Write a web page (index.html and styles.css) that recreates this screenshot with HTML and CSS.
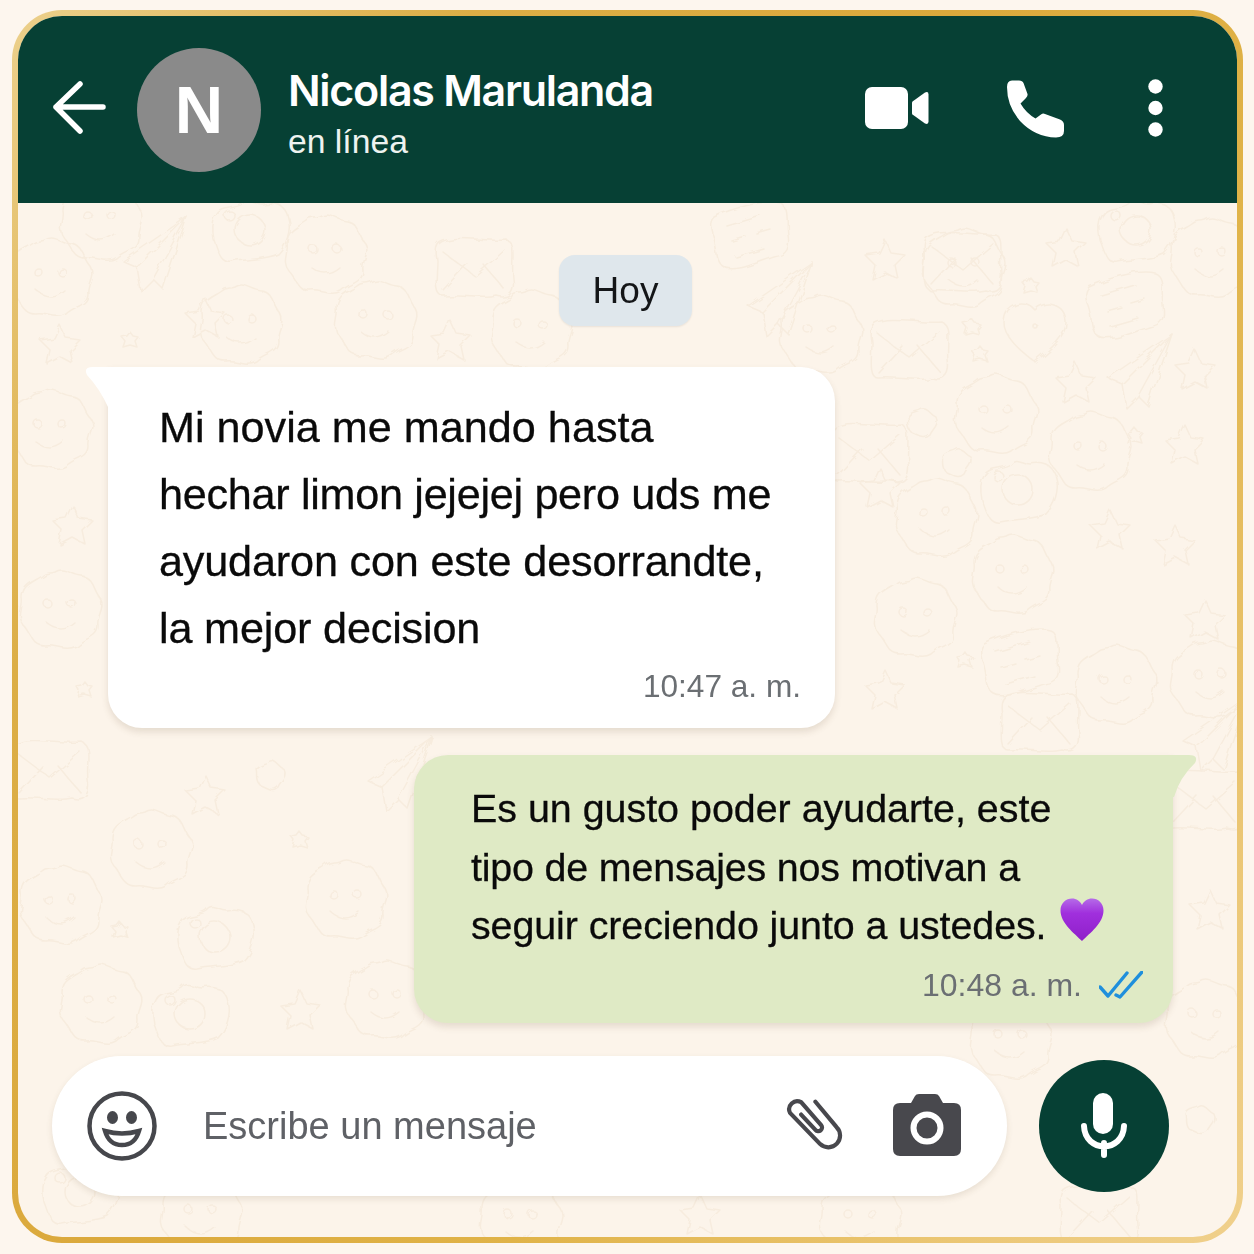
FILE: index.html
```html
<!DOCTYPE html>
<html lang="es">
<head>
<meta charset="utf-8">
<title>Chat</title>
<link rel="stylesheet" href="styles.css">
</head>
<body>
<main class="frame">
  <div class="phone">
    <header class="topbar">
      <svg class="ic-back" viewBox="0 0 54 54"><path d="M3 26H50M27 3 3 26 27 50"/></svg>
      <div class="avatar">N</div>
      <div class="who">
        <div class="name">Nicolas Marulanda</div>
        <div class="status">en línea</div>
      </div>
      <svg class="ic-video" viewBox="0 0 64 44"><rect x="0" y="1" width="43" height="42" rx="7"/><path d="M47.500 15.500 60 6.500Q63.500 5 63.500 8.500V35.500Q63.500 39 60 37.500L47.500 28.500Q47 28 47 27V17Q47 16 47.500 15.500Z"/></svg>
      <svg class="ic-phone" viewBox="0 0 58 58"><path d="M5 .5H12Q15.500 .5 16.500 3L20.500 14Q21 16 19 18L13.500 23.500Q19 33 28.500 38.500L34 34.500Q36 33 38 34L53 39.500Q57 41 57 45V51Q57 57.500 49 57.500 28 57 13 41 0 26 0 7 0 .5 5 .5Z"/></svg>
      <svg class="ic-dots" viewBox="0 0 15 58"><circle cx="7.500" cy="7.500" r="7.200"/><circle cx="7.500" cy="29" r="7.200"/><circle cx="7.500" cy="50.500" r="7.200"/></svg>
    </header>

    <section class="chat">
      <svg class="doodles" viewBox="18 203 1219 1034" aria-hidden="true">
        <defs>
          <filter id="wobble" x="0" y="0" width="100%" height="100%"><feTurbulence type="fractalNoise" baseFrequency=".07" numOctaves="2" seed="4"/><feDisplacementMap in="SourceGraphic" scale="7"/></filter>
          <g id="star"><path d="M0-20 6-7 20-5 10 5 13 19 0 12-13 19-10 5-20-5-6-7Z"/></g>
          <g id="mini"><path d="M-8-3-3-4 0-8 3-4 8-3 5 1 7 7 0 5-7 7-5 1Z"/></g>
          <g id="heart"><path d="M0-20C8-30 30-28 31-8 32 6 12 22 0 32-10 24-32 8-31-8-30-27-9-31 0-20Z"/><circle cx="0" cy="-4" r="2"/></g>
          <g id="face"><path d="M-5-38C5-44 12-34 22-34 34-32 32-20 40-12 46-2 36 6 38 16 38 28 24 28 16 36 6 42-4 34-14 36-28 36-28 24-36 16-44 6-36-2-38-12-38-26-26-28-18-34-14-38-10-36-5-38Z"/><circle cx="-12" cy="-6" r="4"/><circle cx="12" cy="-6" r="4"/><path d="M-14 12Q0 24 14 12"/></g>
          <g id="mail"><path d="M-34-26C-20-34 10-26 32-28 42-24 36-6 38 10 40 22 36 32 22 28 6 32-14 26-32 28-42 28-38 6-38-8-40-18-38-24-34-26Z"/><path d="M-32-16 0 8 30-18M-32 22-8-4M30 22 8-4"/></g>
          <g id="card"><path d="M-36-18C-20-26 14-36 30-32 40-28 36-14 38 0 40 12 38 20 24 22 6 28-16 38-26 32-36 26-32 10-38-2-40-10-40-14-36-18Z"/><path d="M-24-10 10-20M-18 6-4 2M6-2 20-6M-14 22 14 14"/></g>
          <g id="plane"><path d="M32-38 8 34-2 24-14 36-18 12-32 6Z"/><path d="M32-38-18 12M32-38-2 24"/></g>
          <g id="cam"><path d="M-34-12C-30-22-16-18-8-24-2-32 4-24 12-24 24-26 36-24 38-10 42 2 36 18 28 26 16 32 0 30-18 34-30 36-32 22-36 12-38 2-38-6-34-12Z"/><circle cx="0" cy="2" r="15"/><circle cx="-20" cy="-12" r="5"/></g>
          <g id="blob"><path d="M0-14C6-16 8-8 14-6 18 2 10 6 8 12 2 18-4 12-10 10-16 4-12-2-14-6-12-12-6-10 0-14Z"/></g>
        </defs>
        <g filter="url(#wobble)">
        <use href="#star" x="885" y="260"/><use href="#face" x="963" y="268"/><use href="#mail" x="963" y="262"/>
        <use href="#star" x="1066" y="248"/><use href="#cam" x="1136" y="228"/><use href="#face" x="1210" y="258"/>
        <use href="#card" x="1125" y="305"/><use href="#heart" x="1035" y="330"/><use href="#mail" x="910" y="350"/>
        <use href="#plane" x="1140" y="372"/><use href="#star" x="1195" y="370"/><use href="#mini" x="1030" y="285"/>
        <use href="#mini" x="972" y="327"/><use href="#mini" x="980" y="354"/><use href="#star" x="1076" y="383"/>
        <use href="#face" x="995" y="415"/><use href="#blob" x="922" y="423"/><use href="#mail" x="870" y="453"/>
        <use href="#blob" x="957" y="463"/><use href="#cam" x="1018" y="488"/><use href="#face" x="1090" y="452"/>
        <use href="#star" x="1185" y="445"/><use href="#mini" x="1135" y="436"/><use href="#face" x="935" y="518"/>
        <use href="#star" x="880" y="488"/><use href="#face" x="1012" y="575"/><use href="#star" x="1110" y="530"/>
        <use href="#card" x="1020" y="662"/><use href="#star" x="1205" y="620"/>
        <use href="#face" x="915" y="618"/><use href="#face" x="1115" y="685"/><use href="#mini" x="965" y="660"/>
        <use href="#star" x="1175" y="545"/><use href="#face" x="1210" y="680"/><use href="#star" x="885" y="690"/>
        <use href="#mail" x="1040" y="722"/><use href="#plane" x="1215" y="735"/>
        <use href="#plane" x="155" y="255"/><use href="#face" x="100" y="222"/><use href="#face" x="50" y="278"/>
        <use href="#face" x="375" y="320"/><use href="#face" x="325" y="255"/><use href="#cam" x="250" y="228"/>
        <use href="#star" x="205" y="318"/><use href="#mail" x="475" y="268"/><use href="#face" x="240" y="325"/>
        <use href="#star" x="450" y="340"/><use href="#face" x="530" y="330"/><use href="#mini" x="130" y="340"/>
        <use href="#card" x="750" y="235"/><use href="#face" x="820" y="335"/><use href="#plane" x="780" y="300"/>
        <use href="#star" x="60" y="345"/><use href="#face" x="50" y="430"/><use href="#star" x="72" y="525"/>
        <use href="#face" x="60" y="610"/><use href="#mini" x="85" y="690"/><use href="#mail" x="50" y="770"/>
        <use href="#star" x="205" y="795"/><use href="#plane" x="400" y="775"/><use href="#face" x="150" y="850"/>
        <use href="#cam" x="215" y="935"/><use href="#face" x="345" y="900"/><use href="#face" x="60" y="905"/>
        <use href="#blob" x="270" y="775"/><use href="#mini" x="300" y="840"/><use href="#mini" x="120" y="930"/>
        <use href="#face" x="100" y="1005"/><use href="#cam" x="190" y="1012"/><use href="#star" x="300" y="1010"/>
        <use href="#face" x="385" y="1000"/><use href="#mail" x="1205" y="800"/><use href="#star" x="1210" y="910"/>
        <use href="#face" x="1205" y="1020"/><use href="#cam" x="80" y="1190"/><use href="#face" x="200" y="1215"/>
        <use href="#face" x="520" y="1220"/><use href="#star" x="700" y="1215"/><use href="#face" x="860" y="1220"/>
        <use href="#mail" x="1100" y="1215"/><use href="#face" x="1010" y="1040"/><use href="#blob" x="1200" y="1120"/>
        </g>
      </svg>

      <div class="day">Hoy</div>

      <article class="bubble in">
        <p class="text">Mi novia me mando hasta<br><span class="tight">hechar limon jejejej pero uds me</span><br><span class="snug">ayudaron con este desorrandte,</span><br><span class="snug">la mejor decision</span></p>
        <div class="meta">10:47 a. m.</div>
      </article>

      <article class="bubble out">
        <p class="text">Es un gusto poder ayudarte, este<br><span class="snug">tipo de mensajes nos motivan a</span><br><span class="snug2">seguir creciendo junto a ustedes.</span><svg class="emoji" viewBox="0 0 44 44"><defs><linearGradient id="hg" x1="0" y1="0" x2="0" y2="1"><stop offset="0" stop-color="#b56be8"/><stop offset=".35" stop-color="#a02fdd"/><stop offset="1" stop-color="#8f1fc9"/></linearGradient></defs><path fill="url(#hg)" d="M22 43C14 35 .5 25 .5 12.500.5 5 6 .5 12 .5 16.500.5 20 3 22 7 24 3 27.500.5 32 .5 38 .5 43.500 5 43.500 12.500 43.500 25 30 35 22 43Z"/></svg></p>
        <div class="meta">10:48 a. m.<svg class="ticks" viewBox="0 0 44 28"><path d="M1 16 9 25 28 2M17 24 21 26 43 1"/></svg></div>
      </article>

      <footer class="composer">
        <div class="field">
          <svg class="ic-smile" viewBox="0 0 70 72"><circle cx="35" cy="36" r="32.500"/><ellipse class="solid" cx="25.500" cy="27.500" rx="5.500" ry="6.500"/><ellipse class="solid" cx="44.500" cy="27.500" rx="5.500" ry="6.500"/><path d="M18 41Q35 46 52 41 48 55 35 55 22 55 18 41Z"/></svg>
          <span class="placeholder">Escribe un mensaje</span>
          <svg class="ic-clip" viewBox="0 0 63 60"><path d="M33 4.500 55 31A11.500 11.500 0 0 1 38 49L6.300 16.200A8.500 8.500 0 0 1 18 5L39 29A3.800 3.800 0 0 1 33 34L18 18"/></svg>
          <svg class="ic-cam" viewBox="0 0 68 62"><path d="M7 9H18L22 2Q23 0 26 0H42Q45 0 46 2L50 9H61Q68 9 68 16V55Q68 62 61 62H7Q0 62 0 55V16Q0 9 7 9Z"/><circle class="ring" cx="34" cy="34" r="13.500"/></svg>
        </div>
        <button class="mic" type="button" aria-label="Micrófono">
          <svg viewBox="0 0 46 66"><rect class="cap" x="12" y="0" width="20" height="41" rx="10"/><path d="M3 33C4 60 42 60 43 33M23 50V62"/></svg>
        </button>
      </footer>
    </section>
  </div>
</main>
</body>
</html>
```

FILE: styles.css
```css
* { box-sizing: border-box; }
html, body { margin: 0; padding: 0; }
body {
  width: 1254px;
  height: 1254px;
  overflow: hidden;
  background: #fdf6ee;
  font-family: "Liberation Sans", Arial, sans-serif;
}
.frame {
  width: 1231px;
  height: 1233px;
  margin: 10px 0 0 12px;
  padding: 6px;
  border-radius: 50px;
  background: linear-gradient(125deg, #ecd08c 0%, #dcae46 22%, #dba93c 45%, #e0b348 65%, #ecc878 88%, #f0d08c 100%);
}
.phone {
  height: 100%;
  border-radius: 44px;
  overflow: hidden;
  display: flex;
  flex-direction: column;
  background: #fcf4ea;
}
.topbar {
  flex: 0 0 187px;
  background: #064034;
  display: flex;
  align-items: center;
  color: #fff;
  position: relative;
}
.ic-back { width: 54px; height: 54px; margin: 0 0 3px 35px; fill: none; stroke: #fff; stroke-width: 5.500; stroke-linecap: round; stroke-linejoin: round; }
.avatar {
  width: 124px; height: 124px; margin-left: 30px;
  border-radius: 50%;
  background: #8a8a8a;
  display: flex; align-items: center; justify-content: center;
  font-size: 67px; font-weight: 700;
}
.who { margin-left: 27px; flex: 1; margin-top: 9px; }
.name { font-family: Inter, "Liberation Sans", sans-serif; font-size: 43px; font-weight: 600; line-height: 52px; letter-spacing: -1.300px; }
.status { font-size: 33.700px; line-height: 46px; color: #eef3f0; margin-top: 2px; }
.ic-video { width: 64px; height: 44px; fill: #fff; margin: 0 78px 4px 0; }
.ic-phone { width: 58px; height: 58px; fill: #fff; margin: 0 83px 2px 0; }
.ic-dots { width: 15px; height: 58px; fill: #fff; margin: 0 74px 4px 0; }

.chat {
  flex: 1;
  position: relative;
  display: flex;
  flex-direction: column;
  align-items: flex-start;
}
.doodles {
  position: absolute; left: 0; top: 0;
  width: 1219px; height: 1034px;
  fill: none; stroke: #f7ecde; stroke-width: 1.500; stroke-linejoin: round; stroke-linecap: round;
}
.day {
  position: relative;
  align-self: center;
  margin-top: 52px;
  margin-right: 4px;
  width: 133px; height: 71px;
  border-radius: 16px;
  background: #dfe7ec;
  display: flex; align-items: center; justify-content: center;
  font-size: 37px; color: #141618;
  box-shadow: 0 1px 2px rgba(0,0,0,.08);
}
.bubble {
  position: relative;
  color: #0a0a0a;
  box-shadow: 0 4px 7px rgba(90,70,40,.14);
}
.bubble::before {
  content: "";
  position: absolute; top: 0;
  width: 26px; height: 42px;
}
.text { margin: 0; white-space: nowrap; -webkit-text-stroke: .3px #0a0a0a; }
.tight { letter-spacing: -.3px; }
.snug { letter-spacing: -.17px; }
.snug2 { letter-spacing: -.08px; }
.meta { display: flex; align-items: center; justify-content: flex-end; color: #6b6f73; }
.in {
  margin: 41px 0 0 90px;
  width: 727px; height: 361px;
  padding: 27px 34px 0 51px;
  background: #fff;
  border-radius: 0 34px 34px 34px;
}
.in::before {
  left: -24px; width: 25px;
  background: #fff;
  clip-path: path("M25 0H9Q-1 0 3 8Q16 22 24 40H25Z");
}
.in .text { font-size: 43.200px; line-height: 67px; }
.in .meta { font-size: 31.600px; line-height: 44px; margin-top: 2px; }
.out {
  align-self: flex-end;
  margin: 27px 64px 0 0;
  width: 759px; height: 268px;
  padding: 24px 30px 0 57px;
  background: #dfeac5;
  border-radius: 34px 0 34px 34px;
}
.out::before {
  right: -25px; width: 26px;
  background: #dfeac5;
  clip-path: path("M0 0H17Q27 0 23 8Q8 22 2 42H0Z");
}
.out .text { font-size: 39.400px; line-height: 58.700px; }
.emoji { width: 44px; height: 44px; margin-left: 14px; vertical-align: -3px; }
.out .meta { font-size: 32px; line-height: 44px; margin-top: 8px; }
.ticks { width: 44px; height: 28px; margin-left: 17px; fill: none; stroke: #1f8fdc; stroke-width: 3.400; stroke-linecap: round; stroke-linejoin: round; }

.composer {
  position: relative;
  margin: 33px 0 0 34px;
  display: flex;
  align-items: center;
  gap: 32px;
}
.field {
  width: 955px; height: 140px;
  border-radius: 70px;
  background: #fff;
  box-shadow: 0 3px 6px rgba(90,70,40,.12);
  display: flex;
  align-items: center;
}
.ic-smile { width: 70px; height: 72px; margin-left: 35px; flex: none; fill: none; stroke: #46474c; stroke-width: 4.500; }
.ic-smile .solid { fill: #46474c; stroke: none; }
.placeholder { margin-left: 46px; flex: 1; font-size: 38px; color: #5f6166; }
.ic-clip { width: 60px; height: 58px; flex: none; margin-right: 3px; fill: none; stroke: #48484d; stroke-width: 4.400; stroke-linecap: round; stroke-linejoin: round; }
.ic-cam { width: 68px; height: 62px; flex: none; margin-left: 46px; margin-right: 46px; margin-bottom: 2px; fill: #48484d; }
.ic-cam .ring { stroke: #fff; stroke-width: 6; }
.mic {
  width: 130px; height: 132px; padding: 0; border: 0;
  border-radius: 50%;
  background: #064034;
  display: flex; align-items: center; justify-content: center;
}
.mic svg { width: 46px; height: 66px; fill: none; stroke: #fff; stroke-width: 6; stroke-linecap: round; }
.mic .cap { fill: #fff; stroke: none; }
```
